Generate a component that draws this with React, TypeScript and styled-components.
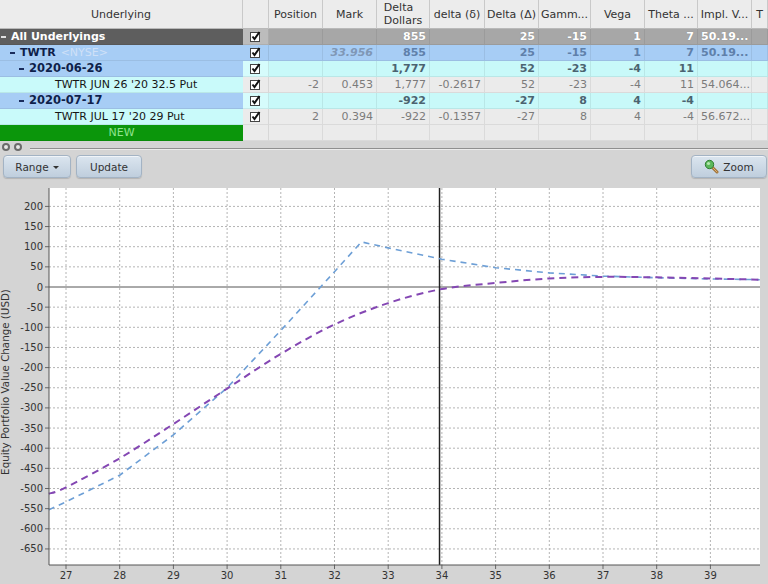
import React from "react";
import styled, { createGlobalStyle, css } from "styled-components";

const GlobalStyle = createGlobalStyle`
  html, body {
    margin: 0;
    padding: 0;
    background: #d4d4d4;
  }
  body {
    font-family: "DejaVu Sans", Verdana, sans-serif;
  }
`;

const COLS = "243px 26px 54px 54px 53px 55px 54px 52px 54px 53px 54px 16px";

type Kind = "total" | "symbol" | "group" | "leg" | "new";

const palette: Record<
  Kind,
  { name: string; nameColor: string; check: string; data: string; dataColor: string; bold: boolean }
> = {
  total: { name: "#5e5e5e", nameColor: "#ffffff", check: "#bcbcbc", data: "#a7a7a7", dataColor: "#ffffff", bold: true },
  symbol: { name: "#a7cdf5", nameColor: "#0f1f4a", check: "#a7cdf5", data: "#a7cdf5", dataColor: "#5f80aa", bold: true },
  group: { name: "#a7cdf5", nameColor: "#0f1f4a", check: "#d6fcfc", data: "#c8f9f9", dataColor: "#4b6370", bold: true },
  leg: { name: "#c9fafa", nameColor: "#161616", check: "#ebebeb", data: "#ebebeb", dataColor: "#7b7b7b", bold: false },
  new: { name: "#0b960b", nameColor: "#8fe38f", check: "#ebebeb", data: "#ebebeb", dataColor: "#7b7b7b", bold: false },
};

const Page = styled.div`
  width: 768px;
  height: 584px;
  overflow: hidden;
  display: flex;
  flex-direction: column;
  background: #d4d4d4;
`;

const Table = styled.div`
  display: flex;
  flex-direction: column;
`;

const Row = styled.div<{ $height: number }>`
  display: grid;
  grid-template-columns: ${COLS};
  height: ${(p) => p.$height}px;
`;

const HeaderCell = styled.div`
  box-sizing: border-box;
  background: #ececec;
  border-right: 1px solid #c9c9c9;
  border-bottom: 1px solid #b9b9b9;
  display: flex;
  align-items: center;
  justify-content: center;
  padding: 0 2px;
  font-size: 11px;
  line-height: 13px;
  color: #333;
  white-space: nowrap;
  overflow: hidden;
`;

const HeaderLines = styled.span`
  text-align: left;
`;

const cellBase = css`
  box-sizing: border-box;
  height: 16px;
  line-height: 15px;
  font-size: 11px;
  white-space: nowrap;
  overflow: hidden;
  border-bottom: 1px solid rgba(0, 0, 0, 0.07);
`;

const NameCell = styled.div<{ $kind: Kind; $indent: number }>`
  ${cellBase};
  display: flex;
  align-items: center;
  padding-left: ${(p) => p.$indent}px;
  background: ${(p) => palette[p.$kind].name};
  color: ${(p) => palette[p.$kind].nameColor};
  font-weight: ${(p) => (p.$kind === "leg" || p.$kind === "new" ? "normal" : "bold")};
  justify-content: ${(p) => (p.$kind === "new" ? "center" : "flex-start")};
  font-size: ${(p) => (p.$kind === "group" ? "11.5px" : "11px")};
`;

const Dash = styled.span<{ $color: string }>`
  display: inline-block;
  width: 5px;
  height: 2px;
  margin-right: 5px;
  background: ${(p) => p.$color};
`;

const Exchange = styled.span`
  margin-left: 5px;
  color: #cfe0f7;
  font-weight: normal;
`;

const CheckCell = styled.div<{ $kind: Kind }>`
  ${cellBase};
  display: flex;
  align-items: center;
  justify-content: center;
  background: ${(p) => palette[p.$kind].check};
  border-right: 1px solid rgba(0, 0, 0, 0.08);
`;

const DataCell = styled.div<{ $kind: Kind; $left?: boolean; $italic?: boolean }>`
  ${cellBase};
  background: ${(p) => palette[p.$kind].data};
  color: ${(p) => (p.$italic ? "#7f97b6" : palette[p.$kind].dataColor)};
  font-weight: ${(p) => (palette[p.$kind].bold ? "bold" : "normal")};
  font-style: ${(p) => (p.$italic ? "italic" : "normal")};
  text-align: ${(p) => (p.$left ? "left" : "right")};
  padding: 0 3px;
  border-right: 1px solid rgba(0, 0, 0, 0.07);
  ${(p) =>
    p.$kind === "total" &&
    css`
      text-shadow: 0 0 1px rgba(0, 0, 0, 0.25);
    `}
`;

const Splitter = styled.div`
  height: 12px;
  display: flex;
  align-items: center;
  padding-left: 2px;
  gap: 4px;
`;

const Knob = styled.span`
  box-sizing: border-box;
  width: 8px;
  height: 8px;
  border-radius: 50%;
  border: 2px solid #6b6b6b;
  background: #e8e8e8;
`;

const SplitLine = styled.div`
  flex: 1;
  height: 0;
  margin-left: 4px;
  margin-top: 3px;
  border-top: 1px solid #8f8f8f;
  border-bottom: 1px solid #ececec;
`;

const Toolbar = styled.div`
  height: 29px;
  display: flex;
  align-items: flex-start;
  padding: 2px 1px 0 3px;
  gap: 5px;
  box-sizing: border-box;
`;

const Spacer = styled.div`
  flex: 1;
`;

const Button = styled.button<{ $width: number }>`
  width: ${(p) => p.$width}px;
  height: 23px;
  box-sizing: border-box;
  display: flex;
  align-items: center;
  justify-content: center;
  gap: 4px;
  padding: 0;
  border: 1px solid #a3b3c4;
  border-radius: 4px;
  background: linear-gradient(#dbe5ef, #bfcedd);
  box-shadow: inset 0 1px 0 rgba(255, 255, 255, 0.6), 0 1px 1px rgba(0, 0, 0, 0.15);
  font-family: "DejaVu Sans", Verdana, sans-serif;
  font-size: 10.5px;
  color: #333;
`;

const Caret = styled.span`
  width: 0;
  height: 0;
  margin-top: 1px;
  border-left: 3px solid transparent;
  border-right: 3px solid transparent;
  border-top: 3px solid #333;
`;

const ChartPanel = styled.div`
  height: 402px;
  background: #d4d4d4;
`;

function CheckBox() {
  return (
    <svg width="11" height="11" viewBox="0 0 11 11">
      <rect x="0.5" y="1.5" width="9" height="9" fill="#fff" stroke="#444" />
      <path d="M2.5 5.5 L4.5 8 L9.5 1" fill="none" stroke="#111" strokeWidth="2" />
    </svg>
  );
}

function ZoomIcon() {
  return (
    <svg width="15" height="15" viewBox="0 0 15 15">
      <path d="M7.5 7.5 L13 13" stroke="#a0743a" strokeWidth="3" strokeLinecap="round" />
      <path d="M7.5 7.5 L13 13" stroke="#e0b070" strokeWidth="1" strokeLinecap="round" />
      <circle cx="5.5" cy="5.5" r="4.2" fill="#5cb85c" stroke="#2f7d32" strokeWidth="1" />
      <circle cx="4.5" cy="4.5" r="1.6" fill="#b6e8b0" />
    </svg>
  );
}

type RowData = {
  kind: Kind;
  indent: number;
  name: string;
  exchange?: string;
  dash?: boolean;
  check: boolean;
  values: string[];
};

const rows: RowData[] = [
  { kind: "total", indent: 1, name: "All Underlyings", dash: true, check: true, values: ["", "", "855", "", "25", "-15", "1", "7", "50.19...", ""] },
  { kind: "symbol", indent: 10, name: "TWTR", exchange: "<NYSE>", dash: true, check: true, values: ["", "33.956", "855", "", "25", "-15", "1", "7", "50.19...", ""] },
  { kind: "group", indent: 19, name: "2020-06-26", dash: true, check: true, values: ["", "", "1,777", "", "52", "-23", "-4", "11", "", ""] },
  { kind: "leg", indent: 55, name: "TWTR JUN 26 '20 32.5 Put", check: true, values: ["-2", "0.453", "1,777", "-0.2617", "52", "-23", "-4", "11", "54.064...", ""] },
  { kind: "group", indent: 19, name: "2020-07-17", dash: true, check: true, values: ["", "", "-922", "", "-27", "8", "4", "-4", "", ""] },
  { kind: "leg", indent: 55, name: "TWTR JUL 17 '20 29 Put", check: true, values: ["2", "0.394", "-922", "-0.1357", "-27", "8", "4", "-4", "56.672...", ""] },
  { kind: "new", indent: 0, name: "NEW", check: false, values: ["", "", "", "", "", "", "", "", "", ""] },
];

const headers = ["Underlying", "", "Position", "Mark", "Delta\nDollars", "delta (δ)", "Delta (Δ)", "Gamm...", "Vega", "Theta ...", "Impl. V...", "T"];

const dashColor: Record<Kind, string> = {
  total: "#e0e0e0",
  symbol: "#1a2c5c",
  group: "#1a2c5c",
  leg: "transparent",
  new: "transparent",
};

// chart geometry (svg coords, panel top = page y 182)
const PLOT = { left: 49, right: 760, top: 6, bottom: 383 };
const xOf = (v: number) => 66 + (v - 27) * 53.7;
const yOf = (p: number) => 105 - p * 0.403;

const blue: [number, number][] = [
  [26.68, -553], [27, -533], [28, -467], [29, -367], [30, -250], [31, -108], [32, 38], [32.5, 112],
  [33, 97], [34, 69], [35, 48], [36, 35], [37, 27], [38, 23], [39, 20], [39.92, 18],
];

const purple: [number, number][] = [
  [26.68, -513], [27, -497], [28, -425], [29, -340], [30, -252], [31, -166], [32, -93], [33, -40],
  [34, -5], [35, 10], [36, 21], [37, 25], [38, 24], [39, 21], [39.92, 18],
];

const linePath = (pts: [number, number][]) =>
  pts.map(([v, p], i) => `${i ? "L" : "M"}${xOf(v).toFixed(1)} ${yOf(p).toFixed(1)}`).join(" ");

const smoothPath = (pts: [number, number][]) => {
  const xy = pts.map(([v, p]) => [xOf(v), yOf(p)]);
  let d = `M${xy[0][0].toFixed(1)} ${xy[0][1].toFixed(1)}`;
  for (let i = 0; i < xy.length - 1; i++) {
    const p0 = xy[i - 1] || xy[i];
    const p1 = xy[i];
    const p2 = xy[i + 1];
    const p3 = xy[i + 2] || p2;
    const c1 = [p1[0] + (p2[0] - p0[0]) / 6, p1[1] + (p2[1] - p0[1]) / 6];
    const c2 = [p2[0] - (p3[0] - p1[0]) / 6, p2[1] - (p3[1] - p1[1]) / 6];
    d += ` C${c1[0].toFixed(1)} ${c1[1].toFixed(1)} ${c2[0].toFixed(1)} ${c2[1].toFixed(1)} ${p2[0].toFixed(1)} ${p2[1].toFixed(1)}`;
  }
  return d;
};

const yTicks = Array.from({ length: 18 }, (_, i) => 200 - i * 50);
const xTicks = Array.from({ length: 13 }, (_, i) => 27 + i);

function PnlChart() {
  return (
    <svg width="768" height="402" viewBox="0 0 768 402" style={{ display: "block" }}>
      <rect x={PLOT.left} y={PLOT.top} width={PLOT.right - PLOT.left} height={PLOT.bottom - PLOT.top} fill="#fff" />
      {yTicks.map((t) => (
        <g key={t}>
          {t !== 0 && (
            <line x1={PLOT.left} x2={PLOT.right} y1={yOf(t)} y2={yOf(t)} stroke="#b4b4b4" strokeDasharray="2 2" />
          )}
          <line x1={PLOT.left - 4} x2={PLOT.left} y1={yOf(t)} y2={yOf(t)} stroke="#666" />
          <text x={PLOT.left - 6} y={yOf(t) + 3.5} textAnchor="end" fontSize="10" fill="#333" fontFamily="DejaVu Sans, sans-serif">
            {t}
          </text>
        </g>
      ))}
      {xTicks.map((t) => (
        <g key={t}>
          <line x1={xOf(t)} x2={xOf(t)} y1={PLOT.top} y2={PLOT.bottom} stroke="#b4b4b4" strokeDasharray="2 2" />
          <line x1={xOf(t)} x2={xOf(t)} y1={PLOT.bottom} y2={PLOT.bottom + 4} stroke="#666" />
          <text x={xOf(t)} y={PLOT.bottom + 14} textAnchor="middle" fontSize="10" fill="#333" fontFamily="DejaVu Sans, sans-serif">
            {t}
          </text>
        </g>
      ))}
      <line x1={PLOT.left} x2={PLOT.right} y1={yOf(0)} y2={yOf(0)} stroke="#555" />
      <line x1={xOf(33.956)} x2={xOf(33.956)} y1={PLOT.top} y2={PLOT.bottom} stroke="#222" strokeWidth="1.5" />
      <path d={linePath(blue)} fill="none" stroke="#6d9fd6" strokeWidth="1.6" strokeDasharray="6 5" />
      <path d={smoothPath(purple)} fill="none" stroke="#8447b3" strokeWidth="2" strokeDasharray="7 5" />
      <line x1={PLOT.left} x2={PLOT.left} y1={PLOT.top} y2={PLOT.bottom} stroke="#555" />
      <line x1={PLOT.left} x2={PLOT.right} y1={PLOT.bottom} y2={PLOT.bottom} stroke="#555" />
      <text
        transform="translate(9 200) rotate(-90)"
        textAnchor="middle"
        fontSize="10.3"
        fill="#333"
        fontFamily="DejaVu Sans, sans-serif"
      >
        Equity Portfolio Value Change (USD)
      </text>
    </svg>
  );
}

export default function App() {
  return (
    <Page>
      <GlobalStyle />
      <Table>
        <Row $height={29}>
          {headers.map((h, i) => (
            <HeaderCell key={i}>
              {h.includes("\n") ? (
                <HeaderLines>
                  {h.split("\n")[0]}
                  <br />
                  {h.split("\n")[1]}
                </HeaderLines>
              ) : (
                h
              )}
            </HeaderCell>
          ))}
        </Row>
        {rows.map((r, i) => (
          <Row key={i} $height={16}>
            <NameCell $kind={r.kind} $indent={r.indent}>
              {r.dash && <Dash $color={dashColor[r.kind]} />}
              {r.name}
              {r.exchange && <Exchange>{r.exchange}</Exchange>}
            </NameCell>
            <CheckCell $kind={r.kind}>{r.check && <CheckBox />}</CheckCell>
            {r.values.map((v, j) => (
              <DataCell key={j} $kind={r.kind} $left={j === 8} $italic={r.kind === "symbol" && j === 1}>
                {v}
              </DataCell>
            ))}
          </Row>
        ))}
      </Table>
      <Splitter>
        <Knob />
        <Knob />
        <SplitLine />
      </Splitter>
      <Toolbar>
        <Button $width={68}>
          Range <Caret />
        </Button>
        <Button $width={66}>Update</Button>
        <Spacer />
        <Button $width={76}>
          <ZoomIcon />
          Zoom
        </Button>
      </Toolbar>
      <ChartPanel>
        <PnlChart />
      </ChartPanel>
    </Page>
  );
}
